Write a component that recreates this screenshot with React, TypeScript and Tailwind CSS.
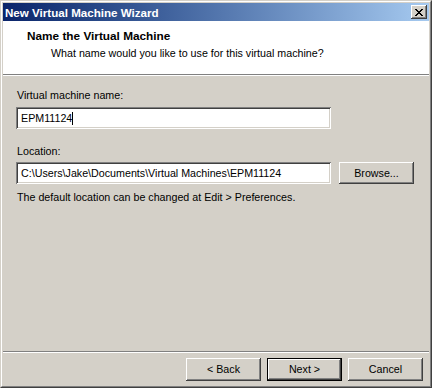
const raised =
  "shadow-[inset_-1px_-1px_0_#404040,inset_1px_1px_0_#ffffff,inset_-2px_-2px_0_#808080]";
const sunken =
  "shadow-[inset_1px_1px_0_#808080,inset_-1px_-1px_0_#ffffff,inset_2px_2px_0_#404040,inset_-2px_-2px_0_#d4d0c8]";

function Button({ label, isDefault }: { label: string; isDefault?: boolean }) {
  if (isDefault) {
    return (
      <div className="w-[75px] h-[23px] border border-black">
        <div className={"w-full h-full flex items-center justify-center bg-[#d4d0c8] " + raised}>
          {label}
        </div>
      </div>
    );
  }
  return (
    <div className={"w-[75px] h-[23px] flex items-center justify-center bg-[#d4d0c8] " + raised}>
      {label}
    </div>
  );
}

export default function App() {
  return (
    <div className="w-[432px] h-[388px] bg-[#d4d0c8] font-['Liberation_Sans',Arial,sans-serif] text-[10.7px] text-black">
      <div className="h-full flex flex-col border border-t-[#d4d0c8] border-l-[#d4d0c8] border-b-[#404040] border-r-[#404040]">
        <div className="flex-1 flex flex-col border border-t-white border-l-white border-b-[#808080] border-r-[#808080] p-px">
          {/* title bar */}
          <div className="h-[18px] flex items-center justify-between pl-[2px] pr-[2px] bg-linear-to-r from-[#0a246a] to-[#a6caf0]">
            <span className="text-white font-bold text-[11.6px] leading-[13px]">New Virtual Machine Wizard</span>
            <div className={"w-[16px] h-[14px] flex items-center justify-center bg-[#d4d0c8] " + raised}>
              <svg width="8" height="7" viewBox="0 0 8 7" shapeRendering="crispEdges">
                <path
                  d="M0 0h2v1H0zM6 0h2v1H6zM1 1h2v1H1zM5 1h2v1H5zM2 2h4v1H2zM3 3h2v1H3zM2 4h4v1H2zM1 5h2v1H1zM5 5h2v1H5zM0 6h2v1H0zM6 6h2v1H6z"
                  fill="#000"
                />
              </svg>
            </div>
          </div>

          {/* header */}
          <div className="h-[53px] bg-white pt-[9px] pl-[24px]">
            <div className="font-bold text-[11.8px] leading-[13px]">Name the Virtual Machine</div>
            <div className="mt-[4px] pl-[24px] leading-[13px]">What name would you like to use for this virtual machine?</div>
          </div>
          <div className="h-px bg-[#808080]" />
          <div className="h-px bg-white" />

          {/* body */}
          <div className="flex-1 flex flex-col">
            <div className="pt-[13px] pl-[13px]">
              <div className="pl-[1px] leading-[13px]">Virtual machine name:</div>
              <div className={"mt-[5px] w-[315px] h-[22px] bg-white flex items-center pl-[5px] " + sunken}>
                <span>EPM11124</span>
                <span className="w-px h-[13px] bg-black" />
              </div>

              <div className="mt-[16px] pl-[1px] leading-[13px]">Location:</div>
              <div className="mt-[4px] flex gap-[8px]">
                <div className={"w-[315px] h-[22px] bg-white flex items-center pl-[5px] " + sunken}>
                  C:\Users\Jake\Documents\Virtual Machines\EPM11124
                </div>
                <div className={"w-[75px] h-[22px] flex items-center justify-center " + raised}>Browse...</div>
              </div>

              <div className="mt-[7px] pl-[1px] leading-[13px]">
                The default location can be changed at Edit &gt; Preferences.
              </div>
            </div>

            <div className="flex-1" />

            <div className="h-px bg-[#808080]" />
            <div className="h-px bg-white" />
            <div className="flex justify-end gap-[6px] pt-[5px] pb-[4px] pr-[6px]">
              <Button label="< Back" />
              <Button label="Next >" isDefault />
              <Button label="Cancel" />
            </div>
          </div>
        </div>
      </div>
    </div>
  );
}
